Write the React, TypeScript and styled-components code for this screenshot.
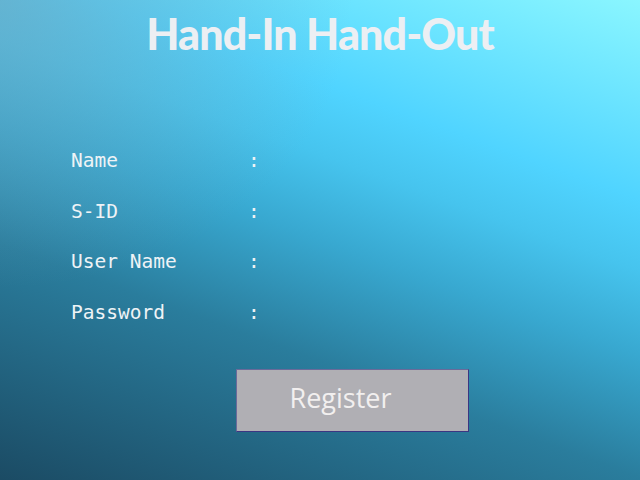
import React from 'react';
import styled, { createGlobalStyle } from 'styled-components';

const GlobalStyle = createGlobalStyle`
  html, body {
    margin: 0;
    padding: 0;
    height: 100%;
  }
  #root {
    height: 100%;
  }
`;

const Page = styled.div`
  width: 640px;
  height: 480px;
  overflow: hidden;
  background:
    radial-gradient(ellipse 55% 60% at 0% 0%, rgba(120, 160, 180, 0.55) 0%, rgba(120, 160, 180, 0) 100%),
    linear-gradient(20deg, #1b4b64 0%, #2a7d9d 33%, #38a8d0 50%, #46c4ee 62%, #50d4ff 72%, #8af6ff 100%);
  display: flex;
  flex-direction: column;
  box-sizing: border-box;
  padding-top: 7px;
`;

const Title = styled.h1`
  margin: 0;
  align-self: center;
  font-family: Lato, 'DejaVu Sans', sans-serif;
  font-weight: 900;
  font-size: 43px;
  line-height: 54px;
  letter-spacing: -0.9px;
  color: #eceff3;
`;

const Form = styled.div`
  padding-left: 71px;
  margin-top: 88px;
  display: flex;
  flex-direction: column;
  gap: 26.5px;
`;

const Row = styled.div`
  display: flex;
  align-items: baseline;
  height: 24px;
  font-family: 'DejaVu Sans Mono', 'Liberation Mono', monospace;
  font-size: 19.5px;
  color: #eef3f6;
`;

const Label = styled.span`
  width: 177px;
`;

const Colon = styled.span``;

const Register = styled.button`
  align-self: flex-start;
  margin-top: 44px;
  margin-left: 236px;
  width: 233px;
  height: 63px;
  box-sizing: border-box;
  background: #b0afb4;
  border: 1px solid #6a6a9a;
  border-right-color: #3b3682;
  border-bottom-color: #3b3682;
  font-family: 'Open Sans', sans-serif;
  font-size: 27px;
  color: #f2efef;
  padding: 0 24px 6px 0;
  text-align: center;
`;

const fields = ['Name', 'S-ID', 'User Name', 'Password'];

const App: React.FC = () => {
  return (
    <>
      <GlobalStyle />
      <Page>
        <Title>Hand-In Hand-Out</Title>
        <Form>
          {fields.map((f) => (
            <Row key={f}>
              <Label>{f}</Label>
              <Colon>:</Colon>
            </Row>
          ))}
        </Form>
        <Register>Register</Register>
      </Page>
    </>
  );
};

export default App;
